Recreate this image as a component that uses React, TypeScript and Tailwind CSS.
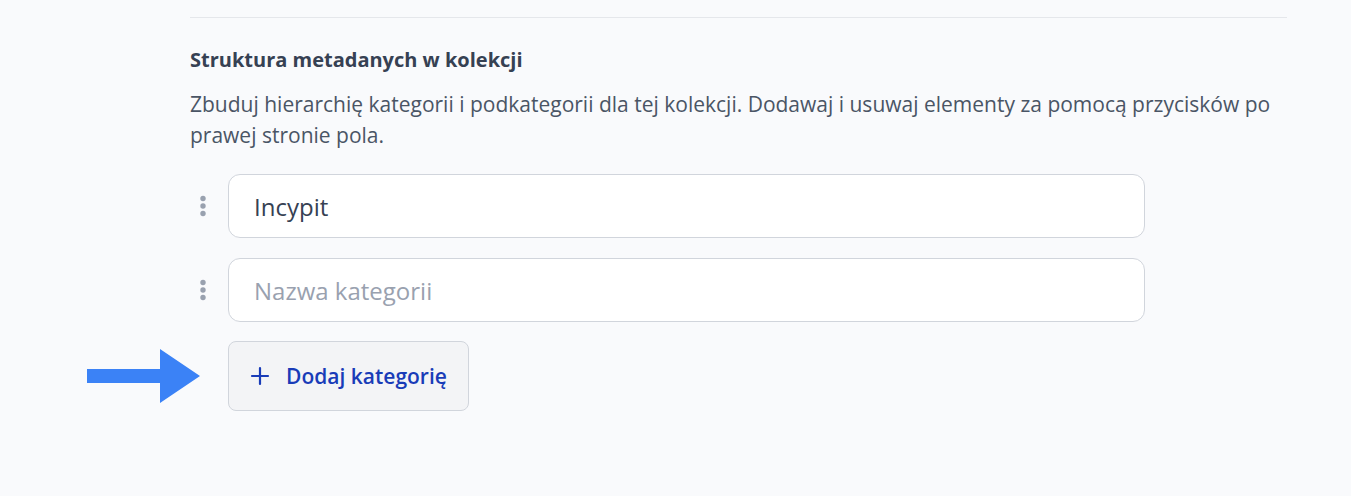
import { useState } from "react";

function DragHandle() {
  return (
    <button type="button" aria-label="Przesuń kategorię" className="flex h-16 w-[26px] shrink-0 items-center justify-center text-gray-400">
      <svg width="6" height="22" viewBox="0 0 6 22" fill="currentColor" aria-hidden="true">
        <circle cx="3" cy="3.5" r="2.7" />
        <circle cx="3" cy="11" r="2.7" />
        <circle cx="3" cy="18.5" r="2.7" />
      </svg>
    </button>
  );
}

function PointerArrow() {
  return (
    <svg
      className="absolute top-1/2 right-full mr-7 -translate-y-1/2"
      width="113"
      height="54"
      viewBox="0 0 113 54"
      fill="#3b82f6"
      aria-hidden="true"
    >
      <path d="M0 20H73V0L113 27L73 54V34H0Z" />
    </svg>
  );
}

export default function App() {
  const [categories, setCategories] = useState<string[]>(["Incypit", ""]);

  const rename = (index: number, name: string) =>
    setCategories(categories.map((category, i) => (i === index ? name : category)));

  return (
    <main className="min-h-screen bg-[#f9fafc] pt-[17px] pr-16 pb-20 pl-[190px] font-['Open_Sans',sans-serif]">
      <section className="border-t border-gray-200 pt-7">
        <h2 className="text-xl leading-7 font-bold text-gray-700">Struktura metadanych w kolekcji</h2>
        <p className="mt-[15px] text-[21px] leading-[31px] text-gray-600">
          Zbuduj hierarchię kategorii i podkategorii dla tej kolekcji. Dodawaj i usuwaj elementy za pomocą przycisków po
          prawej stronie pola.
        </p>
        <ul className="mt-[23px] flex flex-col gap-5 pr-[142px]">
          {categories.map((category, index) => (
            <li key={index} className="flex items-center gap-3">
              <DragHandle />
              <input
                type="text"
                aria-label={`Kategoria ${index + 1}`}
                placeholder="Nazwa kategorii"
                value={category}
                onChange={(event) => rename(index, event.target.value)}
                className="h-16 min-w-0 flex-1 rounded-xl border border-gray-300 bg-white px-[25px] text-2xl text-gray-700 placeholder:text-gray-400"
              />
            </li>
          ))}
        </ul>
        <div className="relative mt-[19px] ml-[38px] w-fit">
          <PointerArrow />
          <button
            type="button"
            onClick={() => setCategories([...categories, ""])}
            className="flex items-center gap-4 rounded-lg border border-gray-300 bg-gray-100 px-[21px] py-5 text-[21px] leading-7 font-semibold text-blue-800"
          >
            <svg width="20" height="20" viewBox="0 0 20 20" fill="none" stroke="currentColor" strokeWidth="2.2" strokeLinecap="round" aria-hidden="true">
              <path d="M10 2V18M2 10H18" />
            </svg>
            Dodaj kategorię
          </button>
        </div>
      </section>
    </main>
  );
}
